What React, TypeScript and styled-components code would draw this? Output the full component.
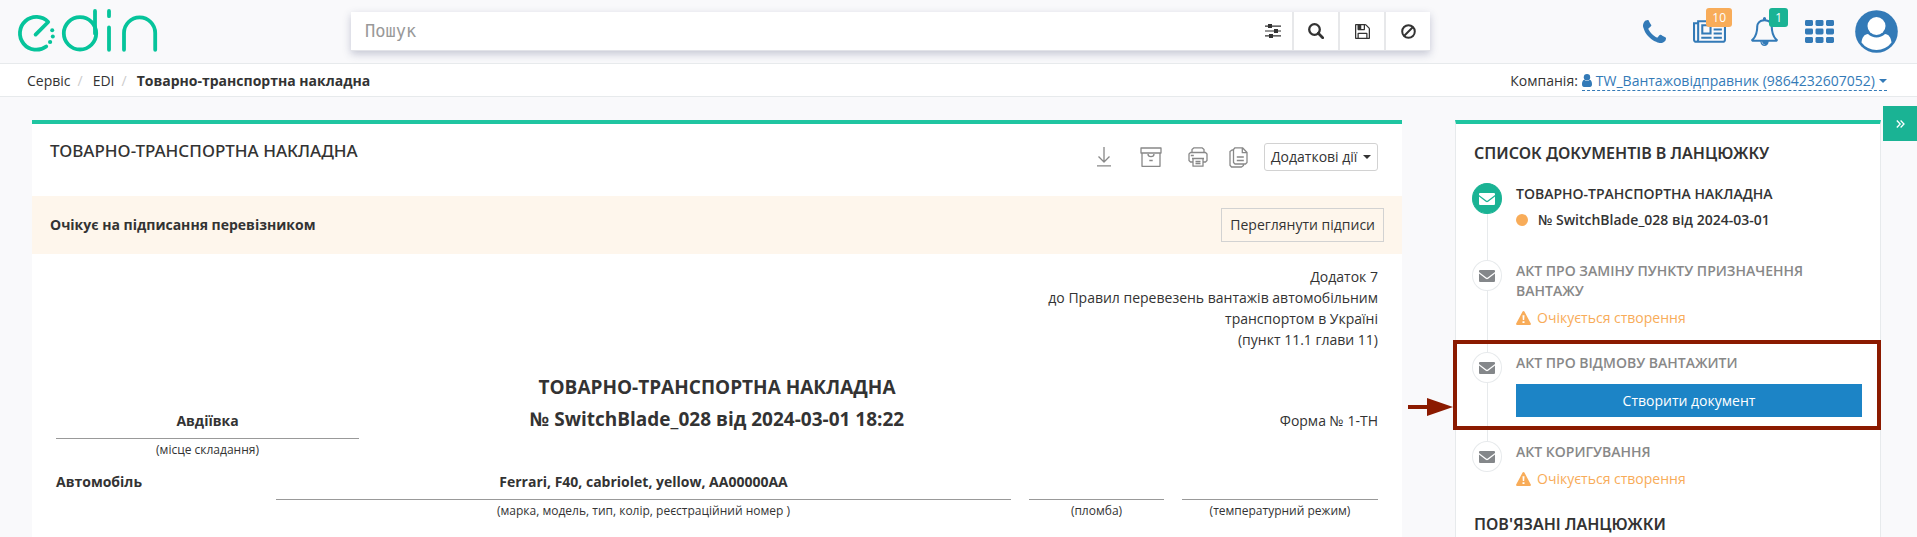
import React from 'react';
import styled, { createGlobalStyle, css } from 'styled-components';

const GlobalStyle = createGlobalStyle`
  * { box-sizing: border-box; }
  body {
    margin: 0;
    background: #f9f9fb;
    color: #333;
    font: 400 14px/20px "Open Sans", "Noto Sans", sans-serif;
  }
  button, input { font: inherit; color: inherit; }
  button { cursor: pointer; }
  h1, h2, p, ol, ul { margin: 0; padding: 0; font: inherit; list-style: none; }
  a { color: inherit; text-decoration: none; }
  svg { display: block; flex: none; }
`;

const Page = styled.div`
  display: flex;
  flex-direction: column;
  min-height: 100vh;
`;

/* Top bar */

const TopBar = styled.header`
  display: grid;
  grid-template-columns: 351fr 1079fr 487fr;
  height: 64px;
  border-bottom: 1px solid #e7eaec;
`;

const Brand = styled.a`
  justify-self: start;
  padding: 8px 0 0 17px;
`;

const SearchForm = styled.form`
  display: flex;
  align-self: start;
  height: 39px;
  margin-top: 12px;
  background: #fff;
  border-bottom: 1px solid #e2e3e8;
  box-shadow: 0 3px 8px rgba(60, 70, 110, 0.28);
`;

const SearchInput = styled.input`
  flex: 1;
  min-width: 0;
  padding: 0 14px;
  border: 0;
  outline: 0;
  background: transparent;
  font: 400 17px/24px "DejaVu Sans Mono", monospace;
  &::placeholder { color: #999; opacity: 1; }
`;

const SearchButton = styled.button<{ $plain?: boolean }>`
  display: flex;
  align-items: center;
  justify-content: center;
  width: ${p => (p.$plain ? 38 : 46)}px;
  padding: 0;
  background: none;
  border: 0;
  ${p => !p.$plain && css`border-left: 2px solid #e7e8ea;`}
`;

const UserTools = styled.nav`
  display: flex;
  align-items: flex-start;
  justify-content: flex-end;
  padding-right: 19px;
  color: #337ab7;
`;

const Tool = styled.a<{ $gap: number }>`
  position: relative;
  display: flex;
  align-items: center;
  height: 62px;
  margin-left: ${p => p.$gap}px;
`;

const Badge = styled.span<{ $tone: 'orange' | 'green' }>`
  position: absolute;
  top: 8px;
  right: ${p => (p.$tone === 'orange' ? -6 : -10)}px;
  padding: 0 6px;
  border-radius: 3px;
  background: ${p => (p.$tone === 'orange' ? '#f8ac59' : '#1ab394')};
  color: #fff;
  font-size: 12px;
  line-height: 19px;
`;

/* Breadcrumb bar */

const CrumbBar = styled.div`
  display: flex;
  align-items: center;
  justify-content: space-between;
  height: 33px;
  padding: 2px 30px 0 27px;
  background: #fff;
  border-bottom: 1px solid #e7eaec;
`;

const Crumbs = styled.ol`
  display: flex;
`;

const Crumb = styled.li`
  & + &::before {
    content: "/";
    padding: 0 10px 0 7px;
    color: #ccc;
    font-weight: 400;
  }
  &:last-child { font-weight: 700; }
`;

const Company = styled.div`
  display: flex;
  gap: 4px;
`;

const CompanyLink = styled.a`
  display: flex;
  align-items: center;
  gap: 4px;
  height: 20px;
  border-bottom: 1px dashed #337ab7;
  color: #337ab7;
`;

/* Main area */

const Main = styled.main`
  display: grid;
  grid-template-columns: 1370fr 53px 426fr 2px 34px;
  flex: 1;
  padding: 9px 0 0 32px;
`;

const Panel = styled.section`
  margin-top: 14px;
  background: #fff;
  border-top: 4px solid #1fc5a1;
`;

const DocumentPanel = styled(Panel)`
  grid-column: 1;
`;

const ChainPanel = styled(Panel)`
  grid-column: 3;
  padding: 18px 18px 0 16px;
  border-right: 1px solid #e7eaec;
  border-left: 1px solid #e7eaec;
`;

const CollapseButton = styled.button`
  grid-column: 5;
  display: flex;
  align-items: center;
  justify-content: center;
  height: 35px;
  padding: 0;
  border: 0;
  background: #1ab394;
  color: #fff;
`;

const DocumentHead = styled.div`
  display: flex;
  justify-content: space-between;
  height: 72px;
  padding: 15px 24px 0 18px;
`;

const DocumentName = styled.h1`
  font: 500 17px/24px "Noto Sans", "Open Sans", sans-serif;
`;

const Actions = styled.div`
  display: flex;
  align-items: center;
  height: 28px;
  margin-top: 4px;
`;

const IconAction = styled.button<{ $wide?: boolean }>`
  display: flex;
  justify-content: center;
  width: ${p => (p.$wide ? 54 : 40)}px;
  padding: 0;
  border: 0;
  background: none;
  color: #888;
`;

const MoreButton = styled.button`
  display: flex;
  align-items: center;
  justify-content: space-between;
  width: 114px;
  height: 28px;
  margin-left: 6px;
  padding: 0 6px;
  border: 1px solid #d2d2d2;
  border-radius: 3px;
  background: #fff;
  white-space: nowrap;
`;

const StatusBanner = styled.div`
  display: flex;
  align-items: center;
  justify-content: space-between;
  height: 58px;
  padding: 0 18px;
  background: #fef6ec;
  font-weight: 700;
`;

const SignaturesButton = styled.button`
  height: 34px;
  padding: 0 8px;
  border: 1px solid #d2d2d2;
  background: none;
  font-weight: 400;
`;

const Sheet = styled.div`
  padding: 12px 24px 0;
`;

const Annex = styled.p`
  line-height: 21px;
  text-align: right;
`;

const TitleRow = styled.div`
  display: grid;
  grid-template-columns: 303fr 716fr 303fr;
  margin-top: 21px;
`;

const SheetTitle = styled.h2`
  font-size: 19px;
  font-weight: 700;
  line-height: 32px;
  text-align: center;
`;

const Side = styled.div`
  padding-top: 40px;
  text-align: right;
`;

const CarRow = styled.div`
  display: grid;
  grid-template-columns: 202fr 735fr 135fr 196fr;
  column-gap: 18px;
  margin-top: 14px;
  font-weight: 700;
`;

const Fields = styled.div`
  padding-left: 6px;
`;

const FieldValue = styled.div`
  height: 28px;
  border-bottom: 1px solid #999;
  font-weight: 700;
  text-align: center;
`;

const FieldCaption = styled.div`
  margin-top: 3px;
  font-size: 12px;
  font-weight: 400;
  line-height: 16px;
  text-align: center;
`;

/* Document chain */

const ChainHeading = styled.h2`
  padding-left: 2px;
  font: 600 16px/22px "Noto Sans", "Open Sans", sans-serif;
`;

const Chain = styled.ol`
  margin-top: 19px;
`;

const Step = styled.li<{ $done?: boolean }>`
  position: relative;
  display: grid;
  grid-template-columns: 30px 1fr;
  column-gap: 14px;
  color: ${p => (p.$done ? '#333' : '#888')};
`;

const Rail = styled.div`
  display: flex;
  flex-direction: column;
  align-items: center;
  &::after {
    content: "";
    flex: 1;
    width: 1px;
    background: #e7eaec;
  }
  ${Step}:last-child &::after { display: none; }
`;

const Dot = styled.span<{ $done?: boolean }>`
  display: flex;
  align-items: center;
  justify-content: center;
  width: 30px;
  height: 31px;
  border: 1px solid ${p => (p.$done ? '#1ab394' : '#e7eaec')};
  border-radius: 50%;
  background: ${p => (p.$done ? '#1ab394' : '#fff')};
  color: ${p => (p.$done ? '#fff' : '#84878a')};
`;

const StepBody = styled.div`
  padding: 1px 0 24px;
`;

const StepTitle = styled.p`
  font-weight: 600;
`;

const StepNumber = styled.p`
  display: flex;
  align-items: center;
  gap: 10px;
  height: 26px;
  margin: 3px 0;
  font-weight: 600;
  &::before {
    content: "";
    width: 12px;
    height: 12px;
    border-radius: 50%;
    background: #f8ac59;
  }
`;

const Pending = styled.p`
  display: flex;
  align-items: center;
  gap: 6px;
  margin-top: 7px;
  color: #f8ac59;
`;

const CreateButton = styled.button`
  display: block;
  width: 100%;
  height: 33px;
  margin-top: 11px;
  border: 0;
  background: #1c84c6;
  color: #fff;
`;

const Highlight = styled.div`
  position: absolute;
  inset: -12px -19px 11px;
  border: 4px solid #8b1a00;
  pointer-events: none;
`;

const Pointer = styled.svg`
  position: absolute;
  top: 54px;
  right: 100%;
  margin-right: 4px;
`;

/* Drawings */

const Glyph = ({ d, w, h, box = '0 0 1792 1792' }: { d: string; w: number; h: number; box?: string }) => (
  <svg width={w} height={h} viewBox={box} fill="currentColor" aria-hidden="true">
    <path d={d} />
  </svg>
);

const PHONE = 'M1408 1240q0 27-10 70.5t-21 68.5q-21 50-122 106-94 51-186 51-27 0-52.5-3.5t-57.5-12.5-47.5-14.5-55.5-20.5-49-18q-98-35-175-83-128-79-264.5-215.5t-215.5-264.5q-48-77-83-175-3-9-18-49t-20.5-55.5-14.5-47.5-12.5-57.5-3.5-52.5q0-92 51-186 56-101 106-122 25-11 68.5-21t70.5-10q14 0 21 3 18 6 53 76 11 19 30 54t35 63.5 31 53.5q3 4 17.5 25t21.5 35.5 7 28.5q0 20-28.5 50t-62 55-62 53-28.5 46q0 9 5 22.5t8.5 20.5 14 24 11.5 19q76 137 174 235t235 174q2 1 19 11.5t24 14 20.5 8.5 22.5 5q18 0 46-28.5t53-62 55-62 50-28.5q14 0 28.5 7t35.5 21.5 25 17.5q25 15 53.5 31t63.5 35 54 30q70 35 76 53 3 7 3 21z';
const NEWS = 'M1024 512h-384v384h384v-384zm128 640v128h-640v-128h640zm0-768v640h-640v-640h640zm640 768v128h-512v-128h512zm0-256v128h-512v-128h512zm0-256v128h-512v-128h512zm0-256v128h-512v-128h512zm-1536 960v-960h-128v960q0 26 19 45t45 19 45-19 19-45zm1664 0v-1088h-1536v1088q0 33-11 64h1483q26 0 45-19t19-45zm128-1216v1216q0 80-56 136t-136 56h-1664q-80 0-136-56t-56-136v-1088h256v-128h1792z';
const BELL = 'M912 1696q0-16-16-16-59 0-101.5-42.5t-42.5-101.5q0-16-16-16t-16 16q0 73 51.5 124.5t124.5 51.5q16 0 16-16zm-666-288h1300q-266-300-266-832 0-51-24-105t-69-103-121.5-80.5-169.5-31.5-169.5 31.5-121.5 80.5-69 103-24 105q0 532-266 832zm1482 0q0 52-38 90t-90 38h-448q0 106-75 181t-181 75-181-75-75-181h-448q-52 0-90-38t-38-90q50-42 91-88t85-119.5 74.5-158.5 50-206 19.5-260q0-152 117-282.5t307-158.5q-8-19-8-39 0-40 28-68t68-28 68 28 28 68q0 20-8 39 190 28 307 158.5t117 282.5q0 139 19.5 260t50 206 74.5 158.5 85 119.5 91 88z';
const FLOPPY = 'M512 1536h768v-384h-768v384zm896 0h128v-896q0-14-10-38.5t-20-34.5l-281-281q-10-10-34-20t-39-10v416q0 40-28 68t-68 28h-576q-40 0-68-28t-28-68v-416h-128v1280h128v-416q0-40 28-68t68-28h832q40 0 68 28t28 68v416zm-384-928v-320q0-13-9.5-22.5t-22.5-9.5h-192q-13 0-22.5 9.5t-9.5 22.5v320q0 13 9.5 22.5t22.5 9.5h192q13 0 22.5-9.5t9.5-22.5zm640 32v928q0 40-28 68t-68 28h-1344q-40 0-68-28t-28-68v-1344q0-40 28-68t68-28h928q40 0 88 20t76 48l280 280q28 28 48 76t20 88z';

const Logo = () => (
  <svg width="142" height="46" viewBox="16 8 142 46" fill="none" stroke="#06c49b" strokeWidth="3.8" strokeLinecap="round" strokeLinejoin="round" aria-hidden="true">
    <path d="M34.6 34.6 47.2 22A16.4 16.4 0 1 0 45.2 46.4" />
    <circle cx="79" cy="33.3" r="16.2" />
    <path d="M94 11v22.5M108 11v5.2M108 27.4v22.4M123 49.8V33a15.6 15.6 0 0 1 31.2 0v16.8" />
    <g fill="#06c49b" stroke="none">
      <circle cx="51.2" cy="30.3" r="2" />
      <circle cx="51.8" cy="36.4" r="2" />
      <circle cx="49.1" cy="42" r="2.1" />
    </g>
  </svg>
);

const Grid9 = () => (
  <svg width="29" height="23" viewBox="0 0 29 23" fill="currentColor" aria-hidden="true">
    {[0, 8.5, 17].map(y => [0, 10.5, 21].map(x => <rect key={`${x}-${y}`} x={x} y={y} width="8" height="6" rx="1.4" />))}
  </svg>
);

const Avatar = () => (
  <svg width="43" height="43" viewBox="0 0 43 43" aria-hidden="true">
    <circle cx="21.5" cy="21.5" r="21.3" fill="currentColor" />
    <path d="M6.5 32.5c.5-5 3-8.500 6.500-8.500 4.500 4.500 12.500 4.500 17 0 3.500 0 6 3.500 6.500 8.500a18.600 18.600 0 0 1-30 0z" fill="#fff" />
    <circle cx="21.500" cy="16" r="9" fill="#fff" />
  </svg>
);

const Mail = () => (
  <svg width="16" height="12" viewBox="0 0 16 12" aria-hidden="true">
    <path fill="currentColor" d="M1 0h14a1 1 0 0 1 1 1v1L8.700 7.500a1.200 1.200 0 0 1-1.400 0L0 2V1a1 1 0 0 1 1-1zM0 3.500 6.800 8.700a2 2 0 0 0 2.400 0L16 3.500V11a1 1 0 0 1-1 1H1a1 1 0 0 1-1-1z" />
  </svg>
);

const Warning = () => (
  <svg width="15" height="14" viewBox="0 0 15 14" aria-hidden="true">
    <path fill="currentColor" d="M6.600.6a1 1 0 0 1 1.800 0l6.400 11.900a1 1 0 0 1-.9 1.500H1.100a1 1 0 0 1-.9-1.500z" />
    <path fill="#fff" d="M6.500 4.300h2l-.3 4.700H6.800zM6.500 10.200h2v1.900h-2z" />
  </svg>
);

const Caret = () => (
  <svg width="8" height="4" viewBox="0 0 8 4" fill="currentColor" aria-hidden="true"><path d="M0 0h8L4 4z" /></svg>
);

const Person = () => (
  <svg width="10" height="13" viewBox="0 0 10 13" fill="currentColor" aria-hidden="true">
    <circle cx="5" cy="3.200" r="3.200" />
    <path d="M2.300 5.800a4 4 0 0 0 5.400 0C9.500 6.200 10 8.300 10 10.300 10 12 9.200 13 8 13H2c-1.200 0-2-1-2-2.700 0-2 .5-4.100 2.300-4.500z" />
  </svg>
);

const LineIcon = ({ w, h, children }: { w: number; h: number; children: React.ReactNode }) => (
  <svg width={w} height={h} viewBox={`0 0 ${w} ${h}`} fill="none" stroke="currentColor" strokeWidth="1.3" strokeLinejoin="round" aria-hidden="true">
    {children}
  </svg>
);

type ChainStep = { title: string; number?: string; creatable?: boolean };

const steps: ChainStep[] = [
  { title: 'ТОВАРНО-ТРАНСПОРТНА НАКЛАДНА', number: '№ SwitchBlade_028 від 2024-03-01' },
  { title: 'АКТ ПРО ЗАМІНУ ПУНКТУ ПРИЗНАЧЕННЯ ВАНТАЖУ' },
  { title: 'АКТ ПРО ВІДМОВУ ВАНТАЖИТИ', creatable: true },
  { title: 'АКТ КОРИГУВАННЯ' },
];

const StepStatus = ({ step }: { step: ChainStep }) => {
  if (step.number) return <StepNumber>{step.number}</StepNumber>;
  if (step.creatable) return <CreateButton type="button">Створити документ</CreateButton>;
  return <Pending><Warning />Очікується створення</Pending>;
};

export default function App() {
  return (
    <Page>
      <GlobalStyle />
      <TopBar>
        <Brand href="#" aria-label="edin"><Logo /></Brand>
        <SearchForm role="search" onSubmit={e => e.preventDefault()}>
          <SearchInput type="text" placeholder="Пошук" aria-label="Пошук" />
          <SearchButton type="button" $plain aria-label="Фільтри">
            <svg width="16" height="14" viewBox="0 0 16 14" fill="currentColor" aria-hidden="true">
              <path d="M0 1.500h16v1.200H0zM0 6.400h16v1.200H0zM0 11.300h16v1.200H0z" />
              <path d="M3 0h4v4H3zM9 5h4v4H9zM4 10h4v4H4z" />
            </svg>
          </SearchButton>
          <SearchButton type="submit" aria-label="Шукати">
            <svg width="16" height="16" viewBox="0 0 16 16" fill="none" stroke="currentColor" aria-hidden="true">
              <circle cx="6.500" cy="6.500" r="5.300" strokeWidth="2.300" />
              <path d="M10.300 10.300 14.700 14.700" strokeWidth="2.700" strokeLinecap="round" />
            </svg>
          </SearchButton>
          <SearchButton type="button" aria-label="Зберегти"><Glyph d={FLOPPY} w={15} h={15} box="128 128 1536 1536" /></SearchButton>
          <SearchButton type="reset" aria-label="Очистити">
            <svg width="15" height="15" viewBox="0 0 15 15" fill="none" stroke="currentColor" strokeWidth="2" aria-hidden="true">
              <circle cx="7.500" cy="7.500" r="6.300" />
              <path d="M12 3 3 12" />
            </svg>
          </SearchButton>
        </SearchForm>
        <UserTools>
          <Tool href="#" $gap={0} aria-label="Телефон"><Glyph d={PHONE} w={23} h={23} box="0 128 1408 1408" /></Tool>
          <Tool href="#" $gap={27} aria-label="Новини">
            <Glyph d={NEWS} w={33} h={23} box="0 128 2048 1408" />
            <Badge $tone="orange">10</Badge>
          </Tool>
          <Tool href="#" $gap={25} aria-label="Сповіщення">
            <Glyph d={BELL} w={27} h={29} box="64 0 1664 1792" />
            <Badge $tone="green">1</Badge>
          </Tool>
          <Tool href="#" $gap={27} aria-label="Застосунки"><Grid9 /></Tool>
          <Tool href="#" $gap={21} aria-label="Профіль"><Avatar /></Tool>
        </UserTools>
      </TopBar>

      <CrumbBar>
        <Crumbs>
          <Crumb><a href="#">Сервіс</a></Crumb>
          <Crumb><a href="#">EDI</a></Crumb>
          <Crumb>Товарно-транспортна накладна</Crumb>
        </Crumbs>
        <Company>
          Компанія:
          <CompanyLink href="#"><Person />TW_Вантажовідправник (9864232607052)<Caret /></CompanyLink>
        </Company>
      </CrumbBar>

      <Main>
        <DocumentPanel>
          <DocumentHead>
            <DocumentName>ТОВАРНО-ТРАНСПОРТНА НАКЛАДНА</DocumentName>
            <Actions>
              <IconAction type="button" aria-label="Завантажити">
                <LineIcon w={16} h={20}><path d="M8 0v15M2.500 9.500 8 15l5.500-5.500M1 18.800h14" /></LineIcon>
              </IconAction>
              <IconAction type="button" $wide aria-label="Архівувати">
                <LineIcon w={22} h={20}>
                  <path d="M1 1h20v5H1zM2 6v13.300h18V6M8 7c0 3.500 6 3.500 6 0M9.300 13.500h3.400" />
                </LineIcon>
              </IconAction>
              <IconAction type="button" aria-label="Друкувати">
                <LineIcon w={20} h={20}>
                  <path d="M4 5.500V2.500l2-1.700h8l2 1.700v3M5 15H2.500L1 13.500V7l1.500-1.500h15L19 7v6.500L17.500 15H15M4 11.500h12M5 11.500v7.700h10v-7.700M7.500 14.500h5M7.500 16.500h5M2.800 8.500h3" />
                </LineIcon>
              </IconAction>
              <IconAction type="button" aria-label="Копіювати">
                <LineIcon w={19} h={21}>
                  <path d="M6 .8h7.500L18 5.500v10L16.500 17H6l-1.500-1.500v-13zM13.300 1v4.700H18M4.500 3H3L1 4.500v13.800L2.500 20h10l2-1.500V17M7.800 10h7M7.800 13.500h7" />
                </LineIcon>
              </IconAction>
              <MoreButton type="button">Додаткові дії<Caret /></MoreButton>
            </Actions>
          </DocumentHead>

          <StatusBanner>
            Очікує на підписання перевізником
            <SignaturesButton type="button">Переглянути підписи</SignaturesButton>
          </StatusBanner>

          <Sheet>
            <Annex>
              Додаток 7<br />
              до Правил перевезень вантажів автомобільним<br />
              транспортом в Україні<br />
              (пункт 11.1 глави 11)
            </Annex>
            <TitleRow>
              <Side>
                <FieldValue>Авдіївка</FieldValue>
                <FieldCaption>(місце складання)</FieldCaption>
              </Side>
              <SheetTitle>
                ТОВАРНО-ТРАНСПОРТНА НАКЛАДНА<br />
                № SwitchBlade_028 від 2024-03-01 18:22
              </SheetTitle>
              <Side>Форма № 1-ТН</Side>
            </TitleRow>
            <CarRow>
              <div>Автомобіль</div>
              <div>
                <FieldValue>Ferrari, F40, cabriolet, yellow, AA00000AA</FieldValue>
                <FieldCaption>(марка, модель, тип, колір, реєстраційний номер )</FieldCaption>
              </div>
              <div>
                <FieldValue />
                <FieldCaption>(пломба)</FieldCaption>
              </div>
              <div>
                <FieldValue />
                <FieldCaption>(температурний режим)</FieldCaption>
              </div>
            </CarRow>
          </Sheet>
        </DocumentPanel>

        <ChainPanel>
          <ChainHeading>СПИСОК ДОКУМЕНТІВ В ЛАНЦЮЖКУ</ChainHeading>
          <Chain>
            {steps.map(step => (
              <Step key={step.title} $done={!!step.number}>
                <Rail><Dot $done={!!step.number}><Mail /></Dot></Rail>
                <StepBody>
                  <StepTitle>{step.title}</StepTitle>
                  <StepStatus step={step} />
                </StepBody>
                {step.creatable && (
                  <Highlight>
                    <Pointer width="45" height="18" viewBox="0 0 45 18" fill="#8b1a00" aria-hidden="true">
                      <path d="M0 7h19V0l26 9-26 9v-7H0z" />
                    </Pointer>
                  </Highlight>
                )}
              </Step>
            ))}
          </Chain>
          <ChainHeading>ПОВ'ЯЗАНІ ЛАНЦЮЖКИ</ChainHeading>
        </ChainPanel>
        <CollapseButton type="button" aria-label="Згорнути">
          <svg width="9" height="8" viewBox="0 0 9 8" fill="none" stroke="currentColor" strokeWidth="1.300" aria-hidden="true">
            <path d="M.8.500 4.200 4 .8 7.500M4.600.5 8 4 4.600 7.500" />
          </svg>
        </CollapseButton>
      </Main>
    </Page>
  );
}
